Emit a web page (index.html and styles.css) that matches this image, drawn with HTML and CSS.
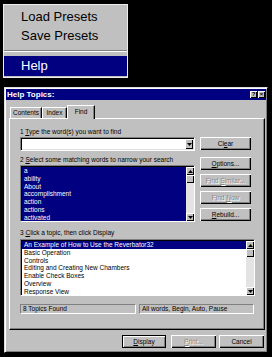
FILE: index.html
```html
<!DOCTYPE html>
<html>
<head>
<meta charset="utf-8">
<link rel="stylesheet" href="styles.css">
</head>
<body>
<div class="menu">
  <div class="mi">Load Presets</div>
  <div class="mi">Save Presets</div>
  <div class="msep"></div>
  <div class="mi active">Help</div>
</div>
<div class="dialog">
  <div class="titlebar">
    <span class="title">Help Topics:</span>
    <span class="tbtns"><span class="tbtn">?</span><span class="tbtn">×</span></span>
  </div>
  <div class="tabs">
    <div class="tab t-contents">Contents</div>
    <div class="tab t-index">Index</div>
    <div class="tab t-find sel">Find</div>
  </div>
  <div class="panel">
    <div class="top">
      <div class="lcol">
        <div class="lbl">1 <u>T</u>ype the word(s) you want to find</div>
        <div class="combo">
          <div class="ddbtn"><svg width="5" height="3" viewBox="0 0 5 3"><path d="M0 0h5L2.5 3z" fill="#000"/></svg></div>
        </div>
        <div class="lbl l2">2 <u>S</u>elect some matching words to narrow your search</div>
        <div class="list list2">
          <div class="items">
            <div>a</div>
            <div>ability</div>
            <div>About</div>
            <div>accomplishment</div>
            <div>action</div>
            <div>actions</div>
            <div>activated</div>
          </div>
          <div class="sb">
            <div class="sbb"><svg width="5" height="3" viewBox="0 0 5 3"><path d="M0 3h5L2.5 0z" fill="#000"/></svg></div>
            <div class="sbb thumb"></div>
            <div class="sbfill"></div>
            <div class="sbb"><svg width="5" height="3" viewBox="0 0 5 3"><path d="M0 0h5L2.5 3z" fill="#000"/></svg></div>
          </div>
        </div>
      </div>
      <div class="rcol">
        <div class="btn b-clear">Cl<u>e</u>ar</div>
        <div class="btn b-opt"><u>O</u>ptions...</div>
        <div class="btn dis">Find <u>S</u>imilar...</div>
        <div class="btn dis">Find <u>N</u>ow</div>
        <div class="btn"><u>R</u>ebuild...</div>
      </div>
    </div>
    <div class="lbl l3">3 <u>C</u>lick a topic, then click Display</div>
    <div class="list list3">
      <div class="items">
        <div class="hl">An Example of How to Use the Reverbator32</div>
        <div>Basic Operation</div>
        <div>Controls</div>
        <div>Editing and Creating New Chambers</div>
        <div>Enable Check Boxes</div>
        <div>Overview</div>
        <div>Response View</div>
      </div>
      <div class="sb">
        <div class="sbb"><svg width="5" height="3" viewBox="0 0 5 3"><path d="M0 3h5L2.5 0z" fill="#000"/></svg></div>
        <div class="sbb thumb"></div>
        <div class="sbfill"></div>
        <div class="sbb"><svg width="5" height="3" viewBox="0 0 5 3"><path d="M0 0h5L2.5 3z" fill="#000"/></svg></div>
      </div>
    </div>
    <div class="status">
      <div class="sbox s1">8 Topics Found</div>
      <div class="sbox s2">All words, Begin, Auto, Pause</div>
    </div>
  </div>
  <div class="bbar">
    <div class="btn def b-disp"><u>D</u>isplay</div>
    <div class="btn dis b-print"><u>P</u>rint...</div>
    <div class="btn b-cancel">Cancel</div>
  </div>
</div>
</body>
</html>
```

FILE: styles.css
```css
html, body {
  margin: 0;
  padding: 0;
}
body {
  background: #000;
  width: 272px;
  height: 357px;
  overflow: hidden;
  font-family: "Liberation Sans", Arial, sans-serif;
  color: #000;
}

/* ---------- popup menu ---------- */
.menu {
  margin: 4px 0 0 3px;
  width: 125px;
  box-sizing: border-box;
  background: #c0c0c0;
  border: 1px solid #ececec;
  padding: 2px 0 1px 0;
}
.mi {
  height: 19px;
  line-height: 19px;
  font-size: 13px;
  padding-left: 17px;
  white-space: nowrap;
}
.mi.active {
  height: 20px;
  line-height: 20px;
  background: #000080;
  color: #fff;
}
.msep {
  margin: 5px 0 4px 0;
  height: 0;
  border-top: 1px solid #808080;
  border-bottom: 1px solid #fff;
}

/* ---------- dialog ---------- */
.dialog {
  margin: 9px 0 0 4px;
  width: 264px;
  height: 266px;
  box-sizing: border-box;
  background: #c0c0c0;
  border: 1px solid;
  border-color: #dfdfdf #000 #000 #dfdfdf;
  box-shadow: inset 1px 1px #fff, inset -1px -1px #808080;
  padding: 1px;
}
.titlebar {
  height: 11px;
  background: #000080;
  display: flex;
  align-items: center;
  justify-content: space-between;
  padding: 0 1px 0 1px;
}
.title {
  color: #fff;
  font-weight: bold;
  font-size: 8px;
  line-height: 11px;
  white-space: nowrap;
}
.tbtns {
  display: flex;
  gap: 1px;
}
.tbtn {
  width: 7px;
  height: 7px;
  background: #c0c0c0;
  box-shadow: inset 1px 1px #fff, inset -1px -1px #000;
  font-size: 6px;
  font-weight: bold;
  line-height: 7px;
  text-align: center;
  color: #000;
}

.tabs {
  display: flex;
  align-items: flex-end;
  height: 18px;
  padding-left: 4px;
}
.tab {
  height: 11px;
  box-sizing: border-box;
  border: 1px solid;
  border-color: #fff #000 transparent #fff;
  border-bottom: none;
  box-shadow: inset -1px 0 #808080;
  font-size: 6.5px;
  line-height: 10px;
  text-align: center;
  white-space: nowrap;
}
.t-contents { width: 32px; }
.t-index { width: 25px; }
.t-find { width: 28px; }
.tab.sel {
  height: 14px;
  margin-bottom: -1px;
  position: relative;
  z-index: 1;
  background: #c0c0c0;
  line-height: 11px;
}

.panel {
  margin-left: 3px;
  width: 256px;
  height: 212px;
  box-sizing: border-box;
  border: 1px solid;
  border-color: #fff #000 #000 #fff;
  box-shadow: inset -1px -1px #808080;
  padding: 9px 0 0 10px;
}

.top {
  display: flex;
  gap: 5px;
}
.lcol {
  width: 175px;
}
.lbl {
  font-size: 6.5px;
  line-height: 8px;
  height: 8px;
  white-space: nowrap;
}
.combo {
  margin-top: 1px;
  height: 14px;
  box-sizing: border-box;
  background: #fff;
  border: 1px solid;
  border-color: #808080 #fff #fff #808080;
  box-shadow: inset 1px 1px #000, inset -1px -1px #dfdfdf;
  display: flex;
  justify-content: flex-end;
  align-items: center;
  padding-right: 1px;
}
.ddbtn {
  width: 8px;
  height: 10px;
  box-sizing: border-box;
  background: #c0c0c0;
  box-shadow: inset 1px 1px #fff, inset -1px -1px #000;
  display: flex;
  align-items: center;
  justify-content: center;
}
.ddbtn svg, .sbb svg { display: block; }

.l2 { margin-top: 5px; }
.l3 { margin-top: 7px; }

.list {
  margin-top: 1px;
  height: 57px;
  box-sizing: border-box;
  border: 1px solid;
  border-color: #808080 #fff #fff #808080;
  box-shadow: inset 1px 1px #000;
  display: flex;
  padding: 1px 0 0 1px;
}
.list2 {
  background: #000080;
  color: #fff;
}
.list3 {
  margin-top: 2px;
  width: 235px;
  background: #fff;
}
.items {
  flex: 1;
  overflow: hidden;
  font-size: 6.5px;
  line-height: 7.75px;
  white-space: nowrap;
}
.items div {
  padding-left: 2px;
}
.items .hl {
  background: #000080;
  color: #fff;
}
.sb {
  width: 8px;
  display: flex;
  flex-direction: column;
  background: #e3e3e3;
}
.sbb {
  height: 8px;
  box-sizing: border-box;
  background: #c0c0c0;
  box-shadow: inset 1px 1px #fff, inset -1px -1px #000;
  display: flex;
  align-items: center;
  justify-content: center;
}
.sbfill { flex: 1; }

.rcol {
  width: 51px;
  display: flex;
  flex-direction: column;
}
.btn {
  height: 13px;
  box-sizing: border-box;
  background: #c0c0c0;
  box-shadow: inset 1px 1px #fff, inset -1px -1px #000, inset -2px -2px #808080;
  font-size: 6.5px;
  line-height: 13px;
  text-align: center;
  white-space: nowrap;
}
.rcol .btn { margin-top: 4px; }
.rcol .b-clear { margin-top: 9px; }
.rcol .b-opt { margin-top: 7px; }
.btn.dis {
  color: #8a8a8a;
  text-shadow: 1px 1px #fff;
}

.status {
  margin-top: 8px;
  display: flex;
  gap: 3px;
}
.sbox {
  height: 10px;
  box-sizing: border-box;
  border: 1px solid;
  border-color: #808080 #fff #fff #808080;
  font-size: 6.5px;
  line-height: 8px;
  padding-left: 2px;
  white-space: nowrap;
}
.s1 { width: 116px; }
.s2 { width: 115px; }

.bbar {
  margin-top: 5px;
  display: flex;
  padding-left: 116px;
}
.b-disp { width: 44px; }
.b-print { width: 45px; margin-left: 5px; }
.b-cancel { width: 45px; margin-left: 3px; }
.btn.def {
  border: 1px solid #000;
  box-shadow: inset 1px 1px #fff, inset -1px -1px #808080;
  line-height: 11px;
}
```
